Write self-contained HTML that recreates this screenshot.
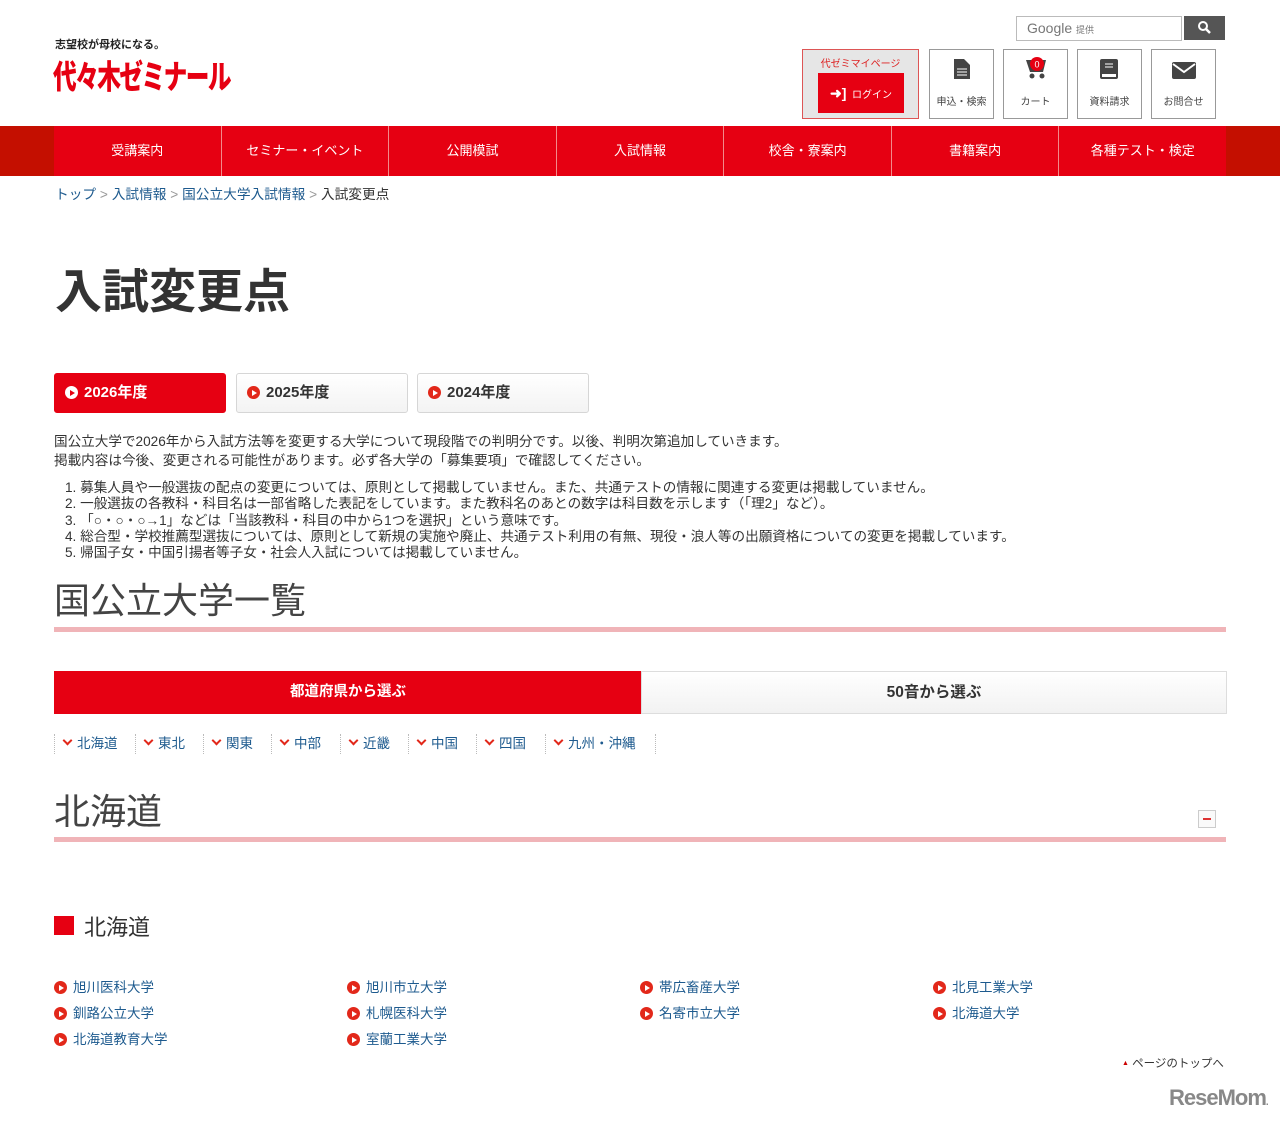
<!DOCTYPE html>
<html><head><meta charset="utf-8">
<style>
*{margin:0;padding:0;box-sizing:border-box}
body{width:1280px;height:1123px;position:relative;background:#fff;font-family:"Liberation Sans","Noto Sans CJK JP",sans-serif;color:#333;overflow:hidden}
.a{position:absolute}
.blue{color:#1d5a8e}
.play{display:inline-block;width:13px;height:13px;border-radius:50%;background:#e2281a;position:relative;vertical-align:-2px;margin-right:6px}
.play:after{content:"";position:absolute;left:5px;top:3.5px;border-left:5px solid #fff;border-top:3px solid transparent;border-bottom:3px solid transparent}
.play.w{background:#fff}.play.w:after{border-left-color:#e60012}
.nav{position:absolute;top:126px;left:0;width:1280px;height:50px;background:#c40f00}
.nav .in{position:absolute;left:54px;width:1172px;height:50px;background:#e60012;display:flex}
.nav .in div{flex:1;color:#fff;font-size:13px;text-align:center;line-height:50px;border-left:1px solid #f28a8a}
.nav .in div:first-child{border-left:none}
.ib{position:absolute;top:49px;width:65px;height:70px;border:1px solid #999;background:#fff;font-size:10px;color:#444;text-align:center}
.ib .t{position:absolute;bottom:10px;width:100%}
.yr{position:absolute;top:373px;width:172px;height:40px;border:1px solid #d6d6d6;border-radius:3px;background:linear-gradient(#fff,#f3f3f3);font-size:15px;font-weight:bold;line-height:38px;padding-left:10px;color:#333}
.reg{position:absolute;top:734px;font-size:13.5px;color:#1d5a8e;line-height:20px;border-left:1px dotted #bbb;padding-left:9px}
.chev{display:inline-block;width:7px;height:7px;border-right:2px solid #e2281a;border-bottom:2px solid #e2281a;transform:rotate(45deg);margin-right:6px;vertical-align:4px}
.uni{position:absolute;font-size:13.5px;color:#1d5a8e}
</style></head><body>
<div class="a" style="left:55px;top:36px;font-size:11px;font-weight:bold;color:#222">志望校が母校になる。</div>
<div class="a" style="left:53px;top:50px;font-size:30px;font-weight:900;color:#e60012;letter-spacing:-2px;transform:scale(0.79,1.1);transform-origin:top left;white-space:nowrap">代々木ゼミナール</div>

<div class="a" style="left:1016px;top:16px;width:166px;height:25px;border:1px solid #bbb;background:#fff;font-size:14px;color:#777;padding:3px 10px">Google <span style="font-size:9px">提供</span></div>
<div class="a" style="left:1184px;top:16px;width:41px;height:24px;background:#555"><svg width="41" height="24"><circle cx="19" cy="10" r="4" stroke="#fff" stroke-width="2" fill="none"/><line x1="22" y1="13" x2="26" y2="17" stroke="#fff" stroke-width="2.5"/></svg></div>

<div class="a" style="left:802px;top:49px;width:117px;height:70px;border:1px solid #d55;background:#e6e6e6">
 <div style="text-align:center;font-size:10px;color:#d22;margin-top:5px">代ゼミマイページ</div>
 <div style="position:absolute;left:15px;top:23px;width:86px;height:40px;background:#e60012;color:#fff;font-size:10px;line-height:40px;text-align:center"><b style="font-size:14px">➜]</b>&nbsp;&nbsp;ログイン</div>
</div>
<div class="ib" style="left:929px"><svg class="a" style="left:24px;top:9px" width="16" height="20"><path d="M0 0h10l6 6v14H0z" fill="#444"/><path d="M3 10h10M3 13h10M3 16h10" stroke="#fff"/></svg><div class="t">申込・検索</div></div>
<div class="ib" style="left:1003px"><svg class="a" style="left:20px;top:6px" width="26" height="24"><path d="M2 4h20l-3 12H6z" fill="#444"/><circle cx="8" cy="20" r="2.5" fill="#444"/><circle cx="18" cy="20" r="2.5" fill="#444"/><circle cx="13" cy="8" r="7" fill="#e60012"/><text x="13" y="11.5" font-size="9" fill="#fff" text-anchor="middle">0</text></svg><div class="t">カート</div></div>
<div class="ib" style="left:1077px"><svg class="a" style="left:22px;top:9px" width="20" height="22"><rect x="0" y="0" width="18" height="20" rx="2" fill="#444"/><path d="M5 5h8M5 8h8" stroke="#fff"/><rect x="2" y="15" width="14" height="3" fill="#fff"/></svg><div class="t">資料請求</div></div>
<div class="ib" style="left:1151px"><svg class="a" style="left:20px;top:12px" width="24" height="17"><rect width="24" height="17" rx="2" fill="#444"/><path d="M1 2l11 8 11-8" stroke="#fff" stroke-width="2" fill="none"/></svg><div class="t">お問合せ</div></div>

<div class="nav"><div class="in"><div>受講案内</div><div>セミナー・イベント</div><div>公開模試</div><div>入試情報</div><div>校舎・寮案内</div><div>書籍案内</div><div>各種テスト・検定</div></div></div>

<div class="a" style="left:55px;top:183px;font-size:13.7px"><span class="blue">トップ</span> <span style="color:#999">&gt;</span> <span class="blue">入試情報</span> <span style="color:#999">&gt;</span> <span class="blue">国公立大学入試情報</span> <span style="color:#999">&gt;</span> 入試変更点</div>

<div class="a" style="left:55px;top:253px;font-size:47px;font-weight:bold;color:#333">入試変更点</div>

<div class="yr" style="left:54px;background:#e60012;border-color:#e60012;color:#fff"><span class="play w"></span>2026年度</div>
<div class="yr" style="left:236px"><span class="play"></span>2025年度</div>
<div class="yr" style="left:417px"><span class="play"></span>2024年度</div>

<div class="a" style="left:54px;top:432px;font-size:13.6px;line-height:19px;color:#333;white-space:nowrap">国公立大学で2026年から入試方法等を変更する大学について現段階での判明分です。以後、判明次第追加していきます。<br>掲載内容は今後、変更される可能性があります。必ず各大学の「募集要項」で確認してください。</div>
<div class="a" style="left:65px;top:480px;font-size:13.6px;line-height:16.3px;color:#333;white-space:nowrap">1. 募集人員や一般選抜の配点の変更については、原則として掲載していません。また、共通テストの情報に関連する変更は掲載していません。<br>2. 一般選抜の各教科・科目名は一部省略した表記をしています。また教科名のあとの数字は科目数を示します（「理2」など）。<br>3. 「○・○・○→1」などは「当該教科・科目の中から1つを選択」という意味です。<br>4. 総合型・学校推薦型選抜については、原則として新規の実施や廃止、共通テスト利用の有無、現役・浪人等の出願資格についての変更を掲載しています。<br>5. 帰国子女・中国引揚者等子女・社会人入試については掲載していません。</div>

<div class="a" style="left:54px;top:572px;font-size:36px;color:#444">国公立大学一覧</div>
<div class="a" style="left:54px;top:627px;width:1172px;height:5px;background:#f0b4b8"></div>

<div class="a" style="left:54px;top:671px;width:588px;height:43px;background:#e60012;color:#fff;font-size:14.5px;font-weight:bold;text-align:center;line-height:43px">都道府県から選ぶ</div>
<div class="a" style="left:641px;top:671px;width:586px;height:43px;border:1px solid #ddd;background:linear-gradient(#fff,#f2f2f2);font-size:15.5px;font-weight:bold;text-align:center;line-height:41px;color:#333">50音から選ぶ</div>

<div class="reg" style="left:54px"><span class="chev"></span>北海道</div>
<div class="reg" style="left:135px"><span class="chev"></span>東北</div>
<div class="reg" style="left:203px"><span class="chev"></span>関東</div>
<div class="reg" style="left:271px"><span class="chev"></span>中部</div>
<div class="reg" style="left:340px"><span class="chev"></span>近畿</div>
<div class="reg" style="left:408px"><span class="chev"></span>中国</div>
<div class="reg" style="left:476px"><span class="chev"></span>四国</div>
<div class="reg" style="left:545px"><span class="chev"></span>九州・沖縄</div>
<div class="a" style="left:655px;top:734px;height:20px;border-left:1px dotted #bbb"></div>

<div class="a" style="left:54px;top:783px;font-size:36px;color:#444">北海道</div>
<div class="a" style="left:1198px;top:810px;width:18px;height:18px;border:1px solid #ccc;background:#fafafa"><div style="position:absolute;left:4px;top:7px;width:8px;height:2px;background:#d33"></div></div>
<div class="a" style="left:54px;top:837px;width:1172px;height:5px;background:#f0b4b8"></div>

<div class="a" style="left:54px;top:916px;width:20px;height:19px;background:#e60012"></div>
<div class="a" style="left:84px;top:910px;font-size:22px;color:#333">北海道</div>

<div class="uni" style="left:54px;top:976px"><span class="play"></span>旭川医科大学</div>
<div class="uni" style="left:54px;top:1002px"><span class="play"></span>釧路公立大学</div>
<div class="uni" style="left:54px;top:1028px"><span class="play"></span>北海道教育大学</div>
<div class="uni" style="left:347px;top:976px"><span class="play"></span>旭川市立大学</div>
<div class="uni" style="left:347px;top:1002px"><span class="play"></span>札幌医科大学</div>
<div class="uni" style="left:347px;top:1028px"><span class="play"></span>室蘭工業大学</div>
<div class="uni" style="left:640px;top:976px"><span class="play"></span>帯広畜産大学</div>
<div class="uni" style="left:640px;top:1002px"><span class="play"></span>名寄市立大学</div>
<div class="uni" style="left:933px;top:976px"><span class="play"></span>北見工業大学</div>
<div class="uni" style="left:933px;top:1002px"><span class="play"></span>北海道大学</div>

<div class="a" style="left:1122px;top:1055px;font-size:11.5px;color:#333"><span style="color:#c00;font-size:7px;vertical-align:2px">▲</span> ページのトップへ</div>
<div class="a" style="left:1169px;top:1085px;font-size:22px;font-weight:bold;color:#888;letter-spacing:-1px">ReseMom<span style="font-size:10px">.</span></div>
</body></html>
